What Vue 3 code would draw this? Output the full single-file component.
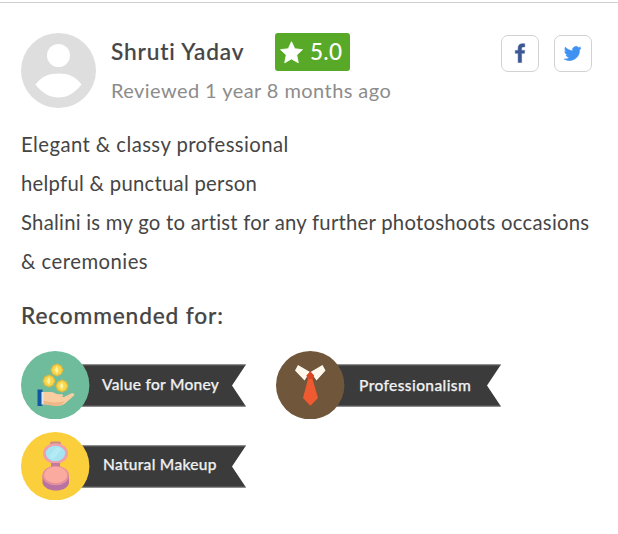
<script setup>
const lines = [
  { text: 'Elegant & classy professional', cls: 'l1' },
  { text: 'helpful & punctual person', cls: 'l2' },
  { text: 'Shalini is my go to artist for any further photoshoots occasions', cls: 'l3' },
  { text: '& ceremonies', cls: 'l4' },
]
const tags = [
  { label: 'Value for Money', icon: 'money', color: '#6fbc9c' },
  { label: 'Professionalism', icon: 'tie', color: '#70563b' },
  { label: 'Natural Makeup', icon: 'makeup', color: '#fbce3c' },
]
</script>

<template>
  <article class="review">
    <header class="head">
      <svg class="avatar" viewBox="0 0 75 75">
        <circle cx="37.5" cy="37.5" r="37.5" fill="#dedede" />
        <circle cx="37.5" cy="22.5" r="11.5" fill="#fff" />
        <path d="M14.500 51.500C20 43.500 28 40.500 37.500 40.500S55 43.500 60.500 51.500C54 60 46 64.500 37.500 64.500S20.500 60 14.500 51.500Z" fill="#fff" />
      </svg>
      <div class="who">
        <div class="row">
          <span class="name">Shruti Yadav</span>
          <span class="badge">
            <svg class="star" viewBox="0 0 22 22"><path d="M11 .7 14.100 7.400 21.500 8.300 16 13.300 17.500 20.800 11 17.100 4.500 20.800 6 13.300.5 8.300 7.900 7.400Z" fill="#fff" stroke="#fff" stroke-width=".8" stroke-linejoin="round" /></svg>
            <span class="score">5.0</span>
          </span>
        </div>
        <span class="date">Reviewed 1 year 8 months ago</span>
      </div>
      <div class="social">
        <span class="share">
          <svg viewBox="0 0 38 38"><path d="M17 28V18.300H14V15.200H17V12.700C17 9.700 18.700 8.200 21.300 8.200H24V11.500H22.300C21.100 11.500 20.700 12.100 20.700 13.100V15.200H24L23.700 18.300H20.700V28Z" fill="#3c5894" stroke="#3c5894" stroke-width=".5" /></svg>
        </span>
        <span class="share">
          <svg viewBox="0 0 38 38"><path d="M27.500 12.700c-.6.300-1.300.5-2 .6.700-.5 1.200-1.100 1.500-1.900-.7.400-1.400.7-2.200.8a3.700 3.700 0 0 0-6.300 3.400c-3-.2-5.800-1.600-7.600-3.900-1 1.700-.5 3.900 1.100 5-.6 0-1.200-.2-1.700-.5 0 1.800 1.200 3.300 3 3.700-.6.200-1.100.2-1.700.1.500 1.500 1.800 2.500 3.500 2.600a7.500 7.500 0 0 1-5.500 1.600 10.600 10.600 0 0 0 16.300-9.500c.7-.6 1.200-1.200 1.600-2Z" fill="#3f91f2" stroke="#3f91f2" stroke-width=".5" /></svg>
        </span>
      </div>
    </header>

    <div class="body">
      <p v-for="l in lines" :key="l.cls" :class="l.cls">{{ l.text }}</p>
    </div>

    <h2 class="rec">Recommended for:</h2>

    <div class="tags">
      <div v-for="t in tags" :key="t.icon" class="tag" :class="t.icon">
        <svg class="art" viewBox="0 0 225 68">
          <path d="M55 13.500H225L211 34.500 225 55.500H55Z" fill="#3b3b3b" />
          <path d="M60 14H224.500M60 55H224.500" stroke="#777" stroke-width=".8" />
          <circle cx="34.200" cy="34.200" r="34.200" :fill="t.color" />
          <g v-if="t.icon === 'money'">
            <g stroke="#e5b93c" stroke-width="1.300" fill="#f8d850">
              <path d="M36 13.200 40 14.900 41.900 19 40 23.100 36 24.800 32 23.100 30.100 19 32 14.900Z" />
              <path d="M28 24.200 32 25.900 33.900 30 32 34.100 28 35.800 24 34.100 22.100 30 24 25.900Z" />
              <path d="M41 29.200 45 30.900 46.900 35 45 39.100 41 40.800 37 39.100 35.100 35 37 30.900Z" />
            </g>
            <path d="M36 15.500 37.500 19 36 22.500 33.500 19ZM28 26.500 29.500 30 28 33.500 25.500 30ZM41 31.500 42.500 35 41 38.500 38.500 35Z" fill="#fff4a0" />
            <path d="M21 41H30C33 41 34 43 37 43.300H41C43 44 42 46 40 46H43L50 42.500C53 41.500 54.500 43 52.500 45L44 52.500C41 55 37 55 33 54.500L21 53Z" fill="#f9cda0" />
            <path d="M21 49C29 52 38 52 44 50L40 54C36 56 30 54 21 53Z" fill="#efb687" />
            <path d="M16.500 38.500H21.500V55H16.500Z" fill="#1455a4" />
            <path d="M20.500 41H22.500V53.500H20.500Z" fill="#dce8ef" />
          </g>
          <g v-else-if="t.icon === 'tie'">
            <path d="M22 14 34 21 28.500 29.500 19 19.500ZM46.500 14 34.500 21 40.500 29.500 49.500 19.500Z" fill="#fff9ed" />
            <path d="M34.300 20.500 38 24.500 36.500 28 42 47 34.300 54.800 27 47 32 28 30.500 24.500Z" fill="#f05a30" />
            <path d="M34.300 20.500 38 24.500 36.500 28H32L30.500 24.500Z" fill="#d84624" />
          </g>
          <g v-else>
            <rect x="29" y="9.500" width="11" height="5" rx="2" fill="#cb8b80" />
            <ellipse cx="34.500" cy="21.500" rx="12.500" ry="10.300" fill="#ef9fab" />
            <ellipse cx="34.500" cy="21.500" rx="9.700" ry="7.800" fill="#a5e4f0" />
            <path d="M28 24 36 15 41 17 32 28Z" fill="#b4eaf3" />
            <path d="M30 31H39V36H30Z" fill="#c4799f" />
            <path d="M21.500 43H48V51C46 61 24 61 21.500 51Z" fill="#b873a2" />
            <ellipse cx="34.700" cy="43.500" rx="13.300" ry="9.800" fill="#e58f9d" />
            <ellipse cx="34.700" cy="43" rx="11.500" ry="8.300" fill="#fbaa9f" />
          </g>
        </svg>
        <span class="label">{{ t.label }}</span>
      </div>
    </div>
  </article>
</template>

<style>
body { margin: 0; background: #fff; }
</style>

<style scoped>
.review {
  box-sizing: border-box;
  width: 618px;
  height: 532px;
  margin-top: 2px;
  border-top: 1px solid #cfcfcf;
  padding: 30px 26px 0 21px;
  font-family: Lato, "Liberation Sans", sans-serif;
  font-variant-ligatures: none;
  color: #454545;
  overflow: hidden;
  white-space: nowrap;
}
.head { display: flex; height: 75px; }
.avatar { width: 75px; height: 75px; flex: none; }
.who { display: flex; flex-direction: column; margin-left: 15px; flex: 1; }
.row { display: flex; align-items: center; height: 38px; }
.name {
  width: 164px;
  font-size: 22.7px;
  font-weight: 500;
  line-height: 38px;
  letter-spacing: .85px;
  -webkit-text-stroke: .2px currentColor;
}
.badge {
  display: flex;
  align-items: center;
  box-sizing: border-box;
  width: 75px;
  height: 38px;
  padding-left: 5px;
  gap: 7px;
  border-radius: 3px;
  background: #58a927;
  color: #fff;
}
.star { width: 23px; height: 23px; }
.score { font-size: 22.5px; font-weight: 500; line-height: 36px; letter-spacing: .3px; }
.date { font-size: 20px; line-height: 26px; margin-top: 6px; letter-spacing: .43px; color: #8c8c8c; }
.social { display: flex; gap: 15px; padding-top: 2px; }
.share {
  box-sizing: border-box;
  width: 38px;
  height: 37px;
  border: 1px solid #d2d2d2;
  border-radius: 7px;
}
.share svg { display: block; width: 36px; height: 36px; }
.body { margin-top: 17px; }
.body p { margin: 0; font-size: 20.3px; line-height: 39px; }
.body .l1 { letter-spacing: .43px; }
.body .l2 { letter-spacing: .27px; }
.body .l3 { letter-spacing: .25px; }
.body .l4 { letter-spacing: .48px; }
.rec {
  margin: 16px 0 0;
  font-size: 22.7px;
  font-weight: 500;
  line-height: 38px;
  letter-spacing: .85px;
  -webkit-text-stroke: .2px currentColor;
}
.tags {
  display: grid;
  grid-template-columns: 225px 225px;
  grid-auto-rows: 68px;
  gap: 12.5px 30px;
  margin-top: 16px;
}
.tag { display: grid; }
.art { grid-area: 1 / 1; width: 225px; height: 68px; }
.label {
  grid-area: 1 / 1;
  padding-left: 81px;
  font-size: 15.5px;
  font-weight: 500;
  line-height: 66px;
  letter-spacing: .3px;
  color: #f0f0f0;
  -webkit-text-stroke: .25px currentColor;
}
.tie .label { padding-left: 83px; letter-spacing: .4px; line-height: 68px; }
.makeup .label { padding-left: 82px; line-height: 65px; }
</style>
